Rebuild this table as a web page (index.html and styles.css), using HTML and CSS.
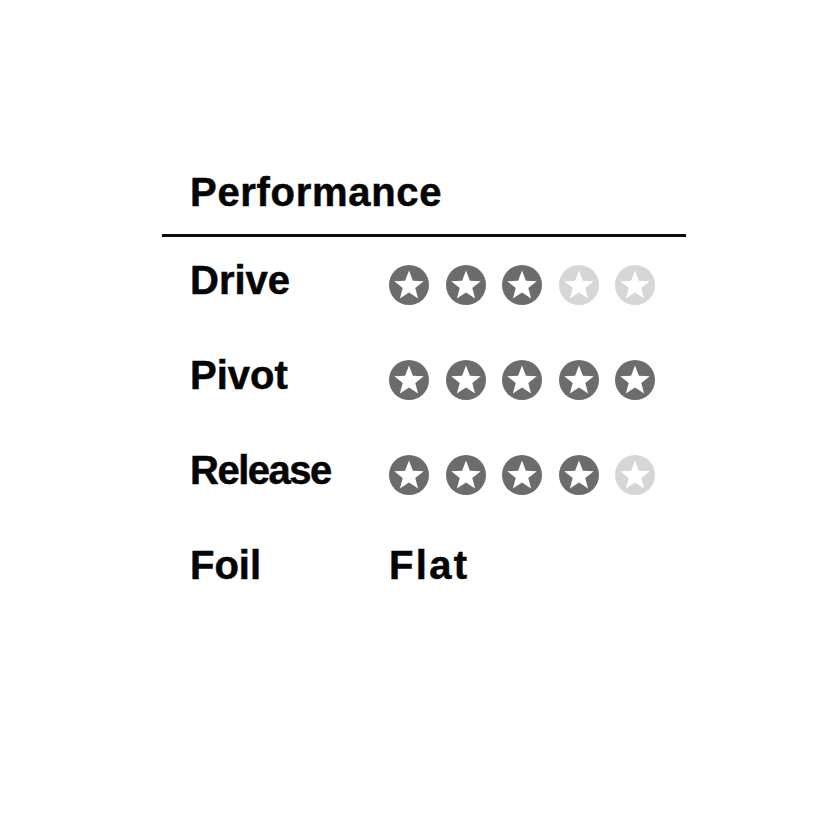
FILE: index.html
```html
<!DOCTYPE html>
<html>
<head>
<meta charset="utf-8">
<link rel="stylesheet" href="styles.css">
</head>
<body>
<svg width="0" height="0" class="defs">
  <defs>
    <symbol id="star" viewBox="0 0 40 40">
      <circle cx="20" cy="20" r="20" fill="currentColor"/>
      <polygon fill="#fff" points="20,5.5 23.88,15.66 34.74,16.21 26.28,23.04 29.11,33.54 20,27.6 10.89,33.54 13.72,23.04 5.26,16.21 16.12,15.66"/>
    </symbol>
  </defs>
</svg>
<div class="card">
  <h2 class="title">Performance</h2>
  <div class="rule"></div>
  <div class="rows">
    <div class="row">
      <div class="label">Drive</div>
      <div class="stars">
        <svg class="star on"><use href="#star"/></svg>
        <svg class="star on"><use href="#star"/></svg>
        <svg class="star on"><use href="#star"/></svg>
        <svg class="star off"><use href="#star"/></svg>
        <svg class="star off"><use href="#star"/></svg>
      </div>
    </div>
    <div class="row">
      <div class="label">Pivot</div>
      <div class="stars">
        <svg class="star on"><use href="#star"/></svg>
        <svg class="star on"><use href="#star"/></svg>
        <svg class="star on"><use href="#star"/></svg>
        <svg class="star on"><use href="#star"/></svg>
        <svg class="star on"><use href="#star"/></svg>
      </div>
    </div>
    <div class="row">
      <div class="label release">Release</div>
      <div class="stars">
        <svg class="star on"><use href="#star"/></svg>
        <svg class="star on"><use href="#star"/></svg>
        <svg class="star on"><use href="#star"/></svg>
        <svg class="star on"><use href="#star"/></svg>
        <svg class="star off"><use href="#star"/></svg>
      </div>
    </div>
    <div class="row">
      <div class="label">Foil</div>
      <div class="value">Flat</div>
    </div>
  </div>
</div>
</body>
</html>
```

FILE: styles.css
```css
html, body {
  margin: 0;
  padding: 0;
  background: #fff;
}
body {
  font-family: "Liberation Sans", Arial, sans-serif;
  color: #050505;
}
.defs {
  position: absolute;
  width: 0;
  height: 0;
}
.card {
  width: 524px;
  margin-left: 162px;
  padding-top: 168px;
}
.title {
  margin: 0 0 18px 0;
  padding-left: 28px;
  font-size: 40px;
  line-height: 48px;
  font-weight: bold;
  letter-spacing: 0.7px;
  -webkit-text-stroke: 0.5px #050505;
}
.rule {
  height: 3px;
  background: #0a0a0a;
}
.rows {
  display: flex;
  flex-direction: column;
  gap: 47px;
  padding-top: 19px;
  padding-left: 28px;
}
.row {
  display: flex;
  align-items: center;
  height: 48px;
}
.label {
  width: 199px;
  font-size: 40px;
  line-height: 48px;
  font-weight: bold;
  -webkit-text-stroke: 0.5px #050505;
}
.label.release {
  letter-spacing: -1.5px;
}
.value {
  font-size: 40px;
  line-height: 48px;
  font-weight: bold;
  letter-spacing: 2.3px;
  -webkit-text-stroke: 0.5px #050505;
}
.stars {
  display: flex;
  gap: 16.5px;
  margin-top: 10px;
}
.star {
  width: 40px;
  height: 40px;
  display: block;
}
.star.on {
  color: #6c6c6c;
}
.star.off {
  color: #d6d6d6;
}
```
